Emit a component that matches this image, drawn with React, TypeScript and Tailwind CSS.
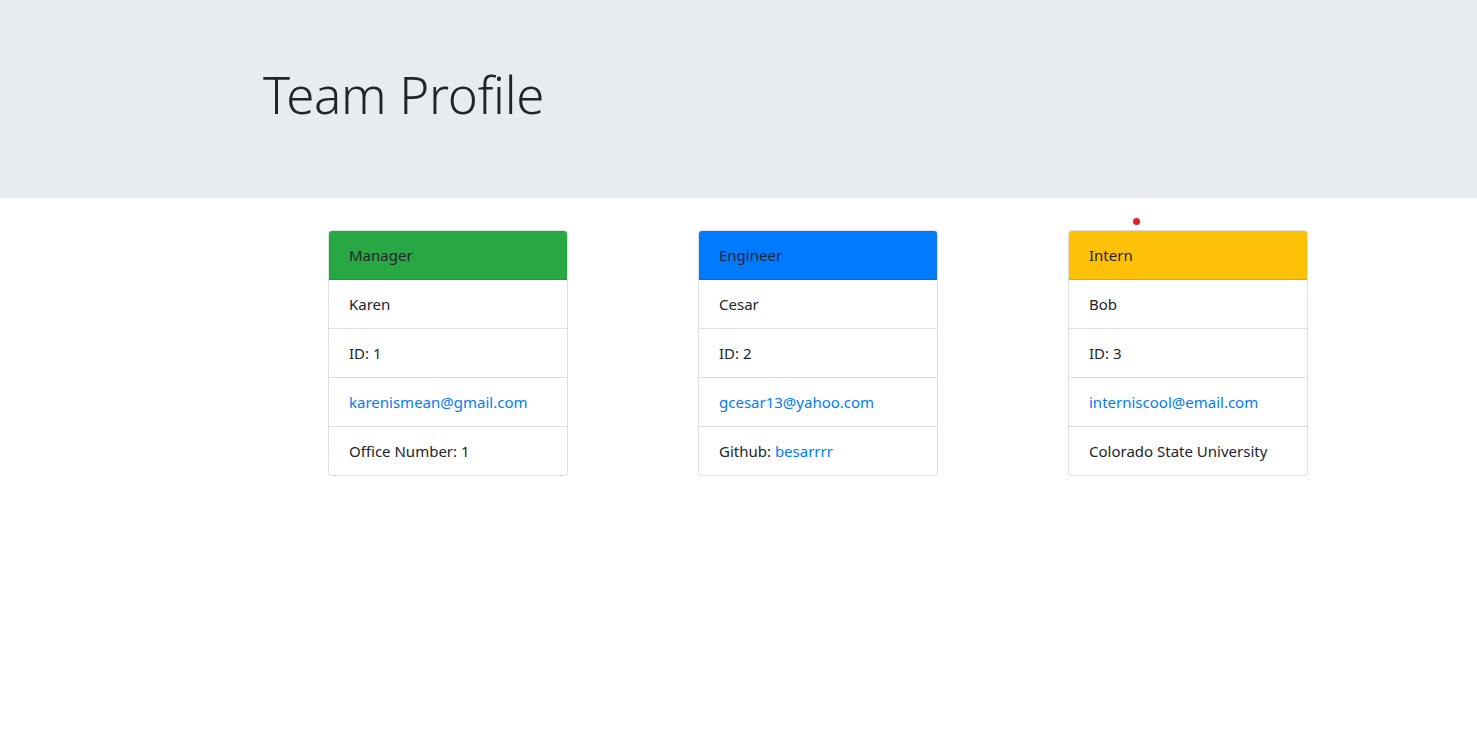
import React from "react";

type Card = {
  role: string;
  header: string;
  name: string;
  id: number;
  email: string;
  last: React.ReactNode;
};

const cards: Card[] = [
  {
    role: "Manager",
    header: "bg-[#28a745]",
    name: "Karen",
    id: 1,
    email: "karenismean@gmail.com",
    last: <span>Office Number: 1</span>,
  },
  {
    role: "Engineer",
    header: "bg-[#007bff]",
    name: "Cesar",
    id: 2,
    email: "gcesar13@yahoo.com",
    last: (
      <span>
        Github: <a className="text-[#007bff]" href="#">besarrrr</a>
      </span>
    ),
  },
  {
    role: "Intern",
    header: "bg-[#ffc107]",
    name: "Bob",
    id: 3,
    email: "interniscool@email.com",
    last: <span>Colorado State University</span>,
  },
];

function ProfileCard({ c }: { c: Card }) {
  return (
    <div className="w-[240px] rounded-[4px] border border-[rgba(0,0,0,0.125)] overflow-hidden bg-white">
      <div className={`${c.header} h-[49px] px-[20px] flex items-center border-b border-[rgba(0,0,0,0.125)]`}>
        {c.role}
      </div>
      <div className="h-[49px] px-[20px] flex items-center border-b border-[rgba(0,0,0,0.125)]">{c.name}</div>
      <div className="h-[49px] px-[20px] flex items-center border-b border-[rgba(0,0,0,0.125)]">ID: {c.id}</div>
      <div className="h-[49px] px-[20px] flex items-center border-b border-[rgba(0,0,0,0.125)]">
        <a className="text-[#007bff]" href="#">{c.email}</a>
      </div>
      <div className="h-[48px] px-[20px] flex items-center">{c.last}</div>
    </div>
  );
}

export default function App() {
  return (
    <div className="relative min-h-[738px] bg-white text-[#212529] text-[15px] leading-[24px] font-['Noto_Sans',sans-serif]">
      <div className="bg-[#e9ecef] h-[198px] pl-[263px] pt-[61px]">
        <h1 className="text-[51px] leading-[67px] font-light tracking-[-0.3px]">Team Profile</h1>
      </div>
      <div className="flex gap-[130px] pl-[328px] pt-[32px]">
        {cards.map((c) => (
          <ProfileCard key={c.role} c={c} />
        ))}
      </div>
      <div className="absolute left-[1133px] top-[218px] w-[7px] h-[7px] rounded-full bg-[#e41c2c]" />
    </div>
  );
}
